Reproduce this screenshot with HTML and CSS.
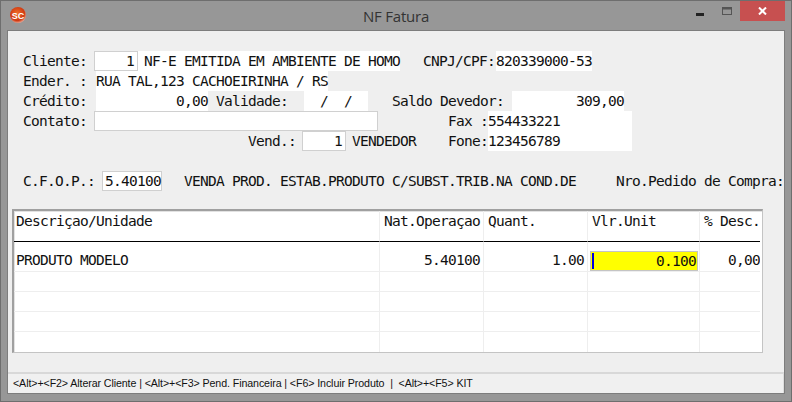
FILE: index.html
```html
<!DOCTYPE html>
<html lang="pt">
<head>
<meta charset="utf-8">
<title>NF Fatura</title>
<link rel="stylesheet" href="styles.css">
</head>
<body>
<div class="window">
  <header class="titlebar">
    <svg class="app-icon" width="18" height="18" viewBox="0 0 18 18">
      <defs><radialGradient id="g" cx="0.45" cy="0.4" r="0.6"><stop offset="0" stop-color="#f0702a"/><stop offset="0.75" stop-color="#cf3a12"/><stop offset="1" stop-color="#e9a08c"/></radialGradient></defs>
      <circle cx="9" cy="9" r="8" fill="url(#g)"/>
      <text x="9" y="12.5" text-anchor="middle" class="app-icon-text">SC</text>
    </svg>
    <div class="title">NF Fatura</div>
    <div class="controls">
      <svg class="ctl-min" width="8" height="3"><rect width="8" height="3" fill="#222"/></svg>
      <svg class="ctl-max" width="10" height="8"><rect x="0.5" y="0.5" width="9" height="7" fill="none" stroke="#555"/><rect x="0.5" y="0.5" width="9" height="2" fill="#555"/></svg>
      <div class="ctl-close"><svg width="9" height="8" viewBox="0 0 9 8"><path d="M1 0.5 L8 7.5 M8 0.5 L1 7.5" stroke="#fff" stroke-width="2"/></svg></div>
    </div>
  </header>
  <main class="client">
    <section class="form">
      <div class="row r1">
        <span class="lbl w-cli">Cliente:</span><span class="box b-code">1</span><span class="fill w-name">NF-E EMITIDA EM AMBIENTE DE HOMO</span><span class="lbl w-cnpj">CNPJ/CPF:</span><span class="fill w-doc">820339000-53</span>
      </div>
      <div class="row r2">
        <span class="lbl w-end">Ender. :</span><span class="fill w-addr">RUA TAL,123 CACHOEIRINHA / RS</span>
      </div>
      <div class="row r3">
        <span class="lbl w-end">Crédito:</span><span class="fill w-cred num">0,00</span><span class="lbl w-val">Validade:</span><span class="fill w-date">&nbsp;&nbsp;/&nbsp;&nbsp;/</span><span class="lbl w-saldo">Saldo Devedor:</span><span class="fill w-sval num">309,00</span>
      </div>
      <div class="row r4">
        <span class="lbl w-cli">Contato:</span><span class="box b-contact"></span><span class="lbl w-fax">Fax :</span><span class="fill w-tel">554433221</span>
      </div>
      <div class="row r5">
        <span class="lbl w-vend">Vend.:</span><span class="box b-code">1</span><span class="lbl w-vname">VENDEDOR</span><span class="lbl w-fone">Fone:</span><span class="fill w-tel">123456789</span>
      </div>
      <div class="row r6">
        <span class="lbl w-cfop">C.F.O.P.:</span><span class="box b-cfop">5.40100</span><span class="lbl w-desc">VENDA PROD. ESTAB.PRODUTO C/SUBST.TRIB.NA COND.DE</span><span class="lbl">Nro.Pedido de Compra:</span>
      </div>
    </section>
    <section class="grid-wrap">
      <div class="grid">
        <div class="tr head">
          <div class="td c1">Descriçao/Unidade</div><div class="td c2">Nat.Operaçao</div><div class="td c3">Quant.</div><div class="td c4">Vlr.Unit</div><div class="td c5">% Desc.</div>
        </div>
        <div class="tr first">
          <div class="td c1">PRODUTO MODELO</div><div class="td c2 num">5.40100</div><div class="td c3 num">1.00</div><div class="td c4 editing"><div class="editor"><span class="caret"></span><span>0.100</span></div></div><div class="td c5 num">0,00</div>
        </div>
        <div class="tr"><div class="td c1"></div><div class="td c2"></div><div class="td c3"></div><div class="td c4"></div><div class="td c5"></div></div>
        <div class="tr"><div class="td c1"></div><div class="td c2"></div><div class="td c3"></div><div class="td c4"></div><div class="td c5"></div></div>
        <div class="tr"><div class="td c1"></div><div class="td c2"></div><div class="td c3"></div><div class="td c4"></div><div class="td c5"></div></div>
        <div class="tr last"><div class="td c1"></div><div class="td c2"></div><div class="td c3"></div><div class="td c4"></div><div class="td c5"></div></div>
      </div>
    </section>
    <footer class="status">&lt;Alt&gt;+&lt;F2&gt; Alterar Cliente | &lt;Alt&gt;+&lt;F3&gt; Pend. Financeira | &lt;F6&gt; Incluir Produto &nbsp;| &nbsp;&lt;Alt&gt;+&lt;F5&gt; KIT</footer>
  </main>
</div>
</body>
</html>
```
FILE: styles.css
```css
* { box-sizing: border-box; }
html, body { margin: 0; padding: 0; }
body { width: 792px; height: 402px; overflow: hidden; background: #979797; }
.window { width: 792px; height: 402px; display: flex; flex-direction: column; background: #979797; border: 1px solid #6e6e6e; padding: 0 6px 7px; }
.titlebar { height: 29px; flex: none; display: flex; align-items: flex-start; margin: 0 -6px; position: relative; padding-left: 8px; }
.app-icon { margin-top: 5px; flex: none; }
.app-icon-text { font: bold 9px "Liberation Sans", sans-serif; fill: #fff; }
.title { position: absolute; left: 0; right: 0; top: 5px; text-align: center; font: 15px/20px "Open Sans", "Liberation Sans", sans-serif; color: #333; letter-spacing: -0.2px; }
.controls { position: absolute; right: 6px; top: 0; display: flex; align-items: flex-start; }
.ctl-min { margin: 12px 18px 0 0; }
.ctl-max { margin: 6px 8px 0 0; }
.ctl-close { width: 45px; height: 20px; background: #c75050; display: flex; align-items: center; justify-content: center; }
.client { flex: 1; display: flex; flex-direction: column; background: #efefef; border: 1px solid #7d7d7d; min-height: 0; }
.form { padding: 20px 0 0 15px; font: 14.5px/20px "DejaVu Sans Mono", monospace; letter-spacing: -0.73px; color: #111; }
.row { display: flex; height: 20px; white-space: pre; }
.row span { flex: none; height: 20px; }
.r6 { margin-top: 20px; }
.fill { background: #fff; }
.num { text-align: right; }
.box { background: #fff; border: 1px solid #d0d0d0; text-align: right; padding-right: 3px; line-height: 18px; }
.b-code { width: 44px; }
.b-contact { width: 284px; }
.b-cfop { width: 60px; text-align: left; padding-left: 2px; padding-right: 0; }
.w-cli { width: 71px; }
.w-end { width: 73px; margin-left: 0; }
.w-name { width: 262px; padding-left: 6px; }
.w-cnpj { width: 96px; padding-left: 23px; }
.w-doc { width: 96px; }
.w-addr { width: 232px; }
.w-cred { width: 112px; }
.w-val { width: 96px; padding-left: 8px; }
.w-date { width: 64px; padding-left: 0; }
.w-saldo { width: 144px; padding-left: 24px; }
.w-sval { width: 112px; }
.w-fax { width: 110px; padding-left: 70px; }
.w-tel { width: 144px; }
.w-vend { width: 54px; margin-left: 225px; }
.w-vname { width: 102px; padding-left: 6px; }
.w-fone { width: 40px; }
.w-cfop { width: 79px; }
.w-desc { width: 454px; padding-left: 22px; }
.grid-wrap { margin: 18px 0 0 4px; width: 751px; height: 144px; border: 1px solid #c4c4c4; border-top: 2px solid #a0a0a0; border-left: 2px solid #a0a0a0; background: #fff; box-shadow: inset 1px 1px 0 #e2e2e2; flex: none; padding-right: 2px; }
.grid { display: flex; flex-direction: column; font: 14.5px/20px "DejaVu Sans Mono", monospace; letter-spacing: -0.73px; color: #111; height: 100%; overflow: hidden; }
.tr { display: flex; height: 20px; flex: none; border-bottom: 1px solid #eee; }
.td { flex: none; height: 100%; border-right: 1px solid #eee; padding: 0 2px; white-space: pre; overflow: hidden; }
.td.num { text-align: right; padding-right: 3px; }
.c1 { width: 366px; padding-left: 2px; }
.c2 { width: 104px; padding-left: 4px; }
.c3 { width: 104px; padding-left: 4px; }
.c4 { width: 112px; padding-left: 4px; }
.c5 { width: 60px; border-right: 0; padding-left: 4px; }
.td.c5.num { padding-right: 0; }
.head { height: 31px; border-bottom: 0; }
.head .td { border-bottom: 1px solid #000; }
.first { height: 30px; }
.first .td { padding-top: 8px; }
.last { border-bottom: 0; flex: 1; }
.first .td.editing { padding: 9px 2px 0 2px; }
.editor { height: 20px; background: #ff0; border: 1px solid #c4c4c4; display: flex; justify-content: space-between; align-items: center; padding: 0 1px; width: 108px; line-height: 16px; }
.caret { width: 2px; height: 16px; background: #0000e0; }
.status { margin-top: 19px; height: 21px; border-top: 2px solid #d8d8d8; border-right: 1px solid #ddd; background: #f0f0f0; font: 10.67px/19px "Liberation Sans", sans-serif; letter-spacing: -0.1px; color: #111; padding-left: 5px; white-space: pre; flex: none; }
```
